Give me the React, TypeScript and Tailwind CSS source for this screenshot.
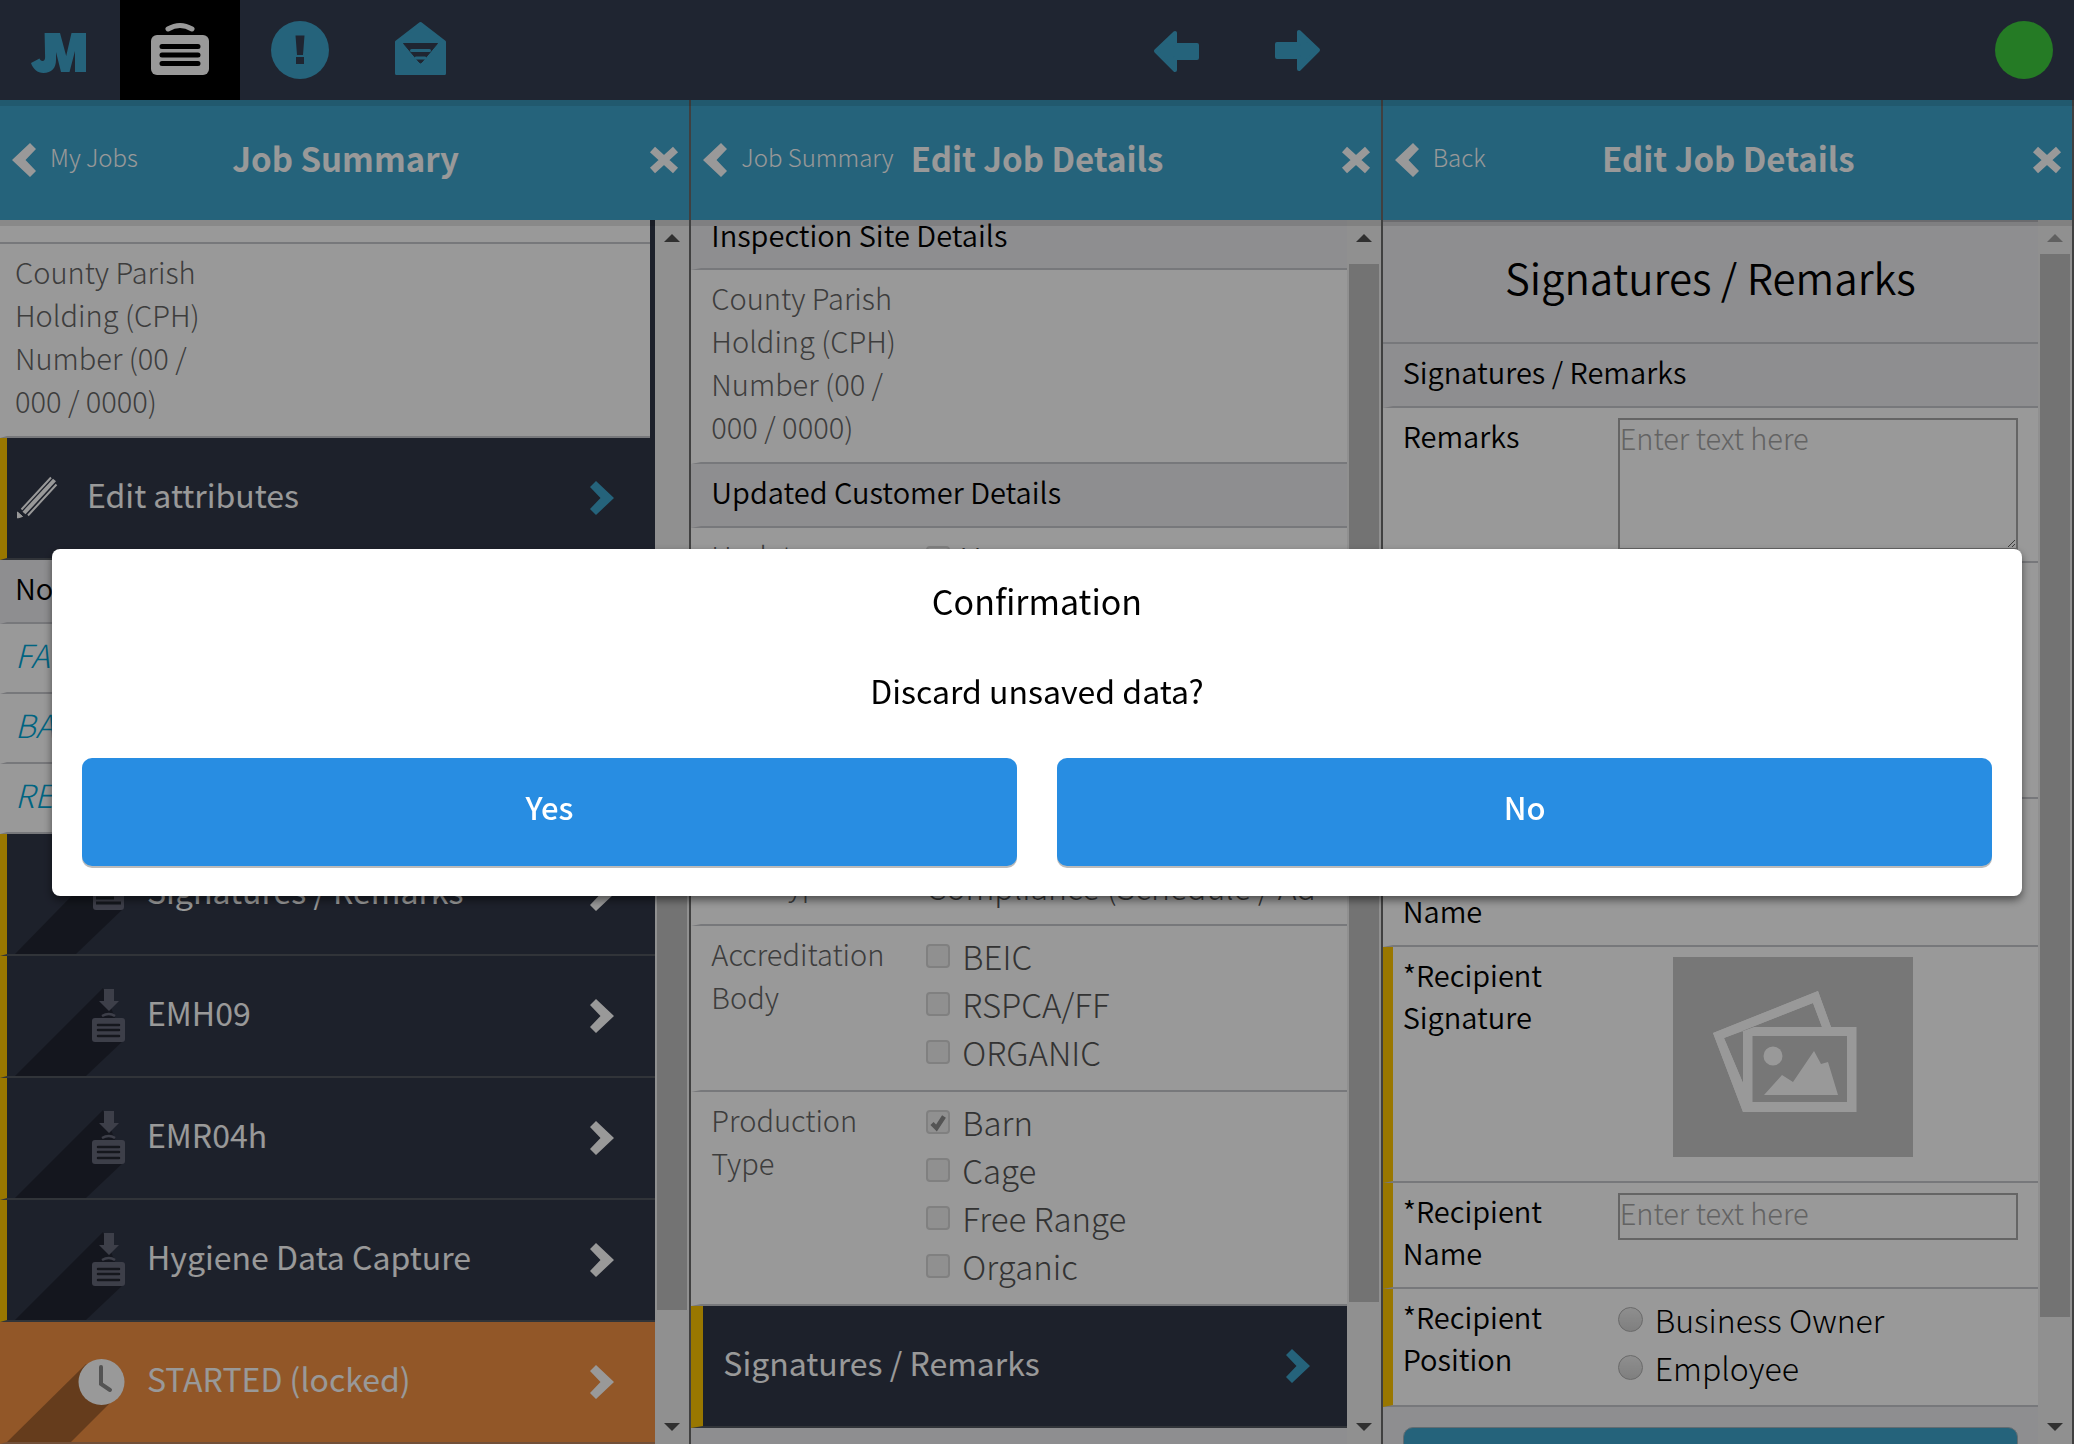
import type { ReactNode } from "react";

const CYAN = "#3ea5cd";

/* ---------- icons ---------- */

function BrandMark() {
  return (
    <svg viewBox="0 0 120 100" className="h-[100px] w-[120px]" aria-hidden="true">
      <path
        fill={CYAN}
        d="M44.6 33H60l6.2 23L71.500 33H86v39H75V51l-5.500 21H61l-5-20v8c0 8-4.500 13-12.500 13-6 0-10.500-4-12.500-10l8.500-4.500c.5 1.500 1.500 2.500 3 2.500 1.800 0 2.600-1.200 2.600-4z"
      />
    </svg>
  );
}

function CaseIcon() {
  return (
    <svg viewBox="0 0 120 100" className="h-[100px] w-[120px]" aria-hidden="true">
      <path d="M48 29q12-7 24 0" fill="none" stroke="#fff" strokeWidth="5" strokeLinecap="round" />
      <rect x="31" y="35" width="58" height="40" rx="6" fill="#fff" />
      <path d="M42 46.500h36M42 55h36M42 63.500h36" stroke="#000" strokeWidth="5" strokeLinecap="round" />
    </svg>
  );
}

function AlertIcon() {
  return (
    <svg viewBox="0 0 120 100" className="h-[100px] w-[120px]" aria-hidden="true">
      <circle cx="60" cy="50" r="29" fill={CYAN} />
      <path d="M55.500 35.500h9L63 55h-6zM56 57h8v7h-8z" fill="#353f52" />
    </svg>
  );
}

function MailIcon() {
  return (
    <svg viewBox="0 0 120 100" className="h-[100px] w-[120px]" aria-hidden="true">
      <path
        fill={CYAN}
        stroke={CYAN}
        strokeWidth="3"
        strokeLinejoin="round"
        d="M60.500 23.500 84.500 42v31.500h-48V42z"
      />
      <path d="M43.500 43.500h34L62 62q-1.500 2-3 0z" fill="#353f52" stroke="#353f52" strokeLinejoin="round" />
      <path d="M51.500 50.500h18M56 58h9" stroke={CYAN} strokeWidth="3" strokeLinecap="round" />
    </svg>
  );
}

function ArrowIcon({ back = false }: { back?: boolean }) {
  return (
    <svg viewBox="0 0 120 100" className="h-[100px] w-[120px]" aria-hidden="true">
      <path
        fill={CYAN}
        stroke={CYAN}
        strokeWidth="4"
        strokeLinejoin="round"
        d={
          back
            ? "M38 51 57 33v12h22v13H57v12z"
            : "M80 50 61 32v12H39v13h22v12z"
        }
      />
    </svg>
  );
}

function Chevron({ left = false, className }: { left?: boolean; className: string }) {
  return (
    <svg viewBox="0 0 24 34" className={className} fill="currentColor" aria-hidden="true">
      <path d={left ? "M18 0 24 6 13.500 17 24 28l-6 6L0 17z" : "M6 0 0 6l10.500 11L0 28l6 6 18-17z"} />
    </svg>
  );
}

function CloseIcon() {
  return (
    <svg viewBox="0 0 30 28" className="h-7 w-[30px]" stroke="#fff" strokeWidth="7.500" aria-hidden="true">
      <path d="M3.500 3.500 26.500 24.500M26.500 3.500 3.500 24.500" />
    </svg>
  );
}

function PencilIcon() {
  return (
    <svg viewBox="7 0 80 120" className="h-[120px] w-20 shrink-0" aria-hidden="true">
      <path d="M21.500 71.500 51 39.500M28 77.500 56.500 46.500" stroke="#fff" strokeWidth="2" />
      <path d="M24 75 54.500 42" stroke="#fff" strokeWidth="4" />
      <path d="M17.500 80v-6l5 4.500z" fill="#fff" stroke="#fff" />
    </svg>
  );
}

function DownloadCaseIcon() {
  return (
    <svg viewBox="7 0 140 120" className="h-[120px] w-[140px] shrink-0" aria-hidden="true">
      <path d="M103 32 15 120h71l38-36z" fill="#000" fillOpacity=".3" />
      <path d="M104 33h10v12h5l-10 10-10-10h5z" fill="#67697b" />
      <path d="M102 60q7-4 13 0" fill="none" stroke="#67697b" strokeWidth="2.500" />
      <rect x="92" y="62" width="33" height="24" rx="3" fill="#67697b" />
      <path d="M98 69h21M98 74h21M98 80h21" stroke="#232731" strokeWidth="2.500" strokeLinecap="round" />
    </svg>
  );
}

function DocumentIcon() {
  return (
    <svg viewBox="7 0 140 120" className="h-[120px] w-[140px] shrink-0" aria-hidden="true">
      <path d="M93 40 15 120h61l48-46z" fill="#000" fillOpacity=".3" />
      <rect x="93" y="36" width="31" height="40" rx="3" fill="#67697b" />
      <path d="M96 56h25M96 64h18M96 69h25" stroke="#232731" strokeWidth="3" />
    </svg>
  );
}

function ClockIcon() {
  return (
    <svg viewBox="7 0 140 120" className="h-[120px] w-[140px] shrink-0" aria-hidden="true">
      <path d="M86 42 7 120h64l42-42z" fill="#000" fillOpacity=".3" />
      <circle cx="101.500" cy="60" r="23" fill="#fff" />
      <path d="M101 45v17l9 6" fill="none" stroke="#8a8a8a" strokeWidth="4" strokeLinecap="round" />
    </svg>
  );
}

function PicturePlaceholder() {
  return (
    <div className="flex justify-center pt-1 pr-[50px] pb-2.5">
      <svg viewBox="0 0 240 200" className="h-[200px] w-60" role="img" aria-label="No picture">
        <rect width="240" height="200" fill="#c6c6c6" />
        <path
          fill="#fff"
          fillRule="evenodd"
          d="M145 34 40 76l30 79h113.500V70H158zM140 46l9 24H81l-11 4-19 7zM51 81l19-7.500V126zM79.500 79H174v66H79.500z"
        />
        <path fill="#fff" d="M40 76 145 34l13 36h-9l-9-24-89 35 19 45v29z" />
        <circle cx="100" cy="99" r="9.500" fill="#fff" />
        <path d="M91 138 109 118l11 7 21-31 7 13 7-2 10 33z" fill="#fff" />
      </svg>
    </div>
  );
}

/* ---------- building blocks ---------- */

function Panel({
  back,
  title,
  thumb,
  upMuted = false,
  children,
}: {
  back: string;
  title: string;
  thumb: [number, number, number];
  upMuted?: boolean;
  children: ReactNode;
}) {
  return (
    <section className="flex min-h-0 min-w-0 flex-col border-r-2 border-[#6c6c6c]">
      <header className="relative z-10 grid h-[120px] shrink-0 grid-cols-[1fr_auto_1fr] items-center bg-[#3ea5cd] pr-2.5 pl-3 text-white shadow-[0_6px_0_rgba(0,0,0,0.1)]">
        <button type="button" className="flex items-center gap-3.5">
          <Chevron left className="h-[34px] w-6 shrink-0" />
          <span className="pb-1.5 text-[24px] leading-9 font-light whitespace-nowrap">{back}</span>
        </button>
        <h2 className="pb-1 text-[33px] leading-[48px] font-bold whitespace-nowrap">{title}</h2>
        <button type="button" aria-label="Close" className="justify-self-end">
          <CloseIcon />
        </button>
      </header>
      <div className="flex min-h-0 grow">
        <div className="flex min-w-0 grow flex-col overflow-hidden bg-[#ededf0]">{children}</div>
        <div className="flex w-[34px] shrink-0 flex-col items-center bg-[#f0f0f0]" aria-hidden="true">
          <svg viewBox="0 0 34 34" className="size-[34px] shrink-0">
            <path d="M9 22h16l-8-8z" fill={upMuted ? "#a0a0a0" : "#505050"} />
          </svg>
          <div style={{ flexGrow: thumb[0] }} />
          <div className="w-[30px] bg-[#c0c0c0]" style={{ flexGrow: thumb[1] }} />
          <div style={{ flexGrow: thumb[2] }} />
          <svg viewBox="0 0 34 34" className="size-[34px] shrink-0">
            <path d="M9 13h16l-8 8z" fill="#505050" />
          </svg>
        </div>
      </div>
    </section>
  );
}

function SectionHeading({ children }: { children: ReactNode }) {
  return (
    <h3 className="shrink-0 border-b-2 border-l-10 border-b-[#c7c8cd] border-l-[#ededf0] bg-[#ededf0] pt-1.5 pb-3.5 pl-2.5 text-[29px] leading-[42px] font-[350] text-black">
      {children}
    </h3>
  );
}

function Field({
  label,
  required = false,
  muted = false,
  children,
}: {
  label: ReactNode;
  required?: boolean;
  muted?: boolean;
  children?: ReactNode;
}) {
  return (
    <div
      className={`flex shrink-0 border-b-2 border-l-10 border-b-[#c7c8cd] bg-white pt-1.5 pb-3.5 pl-2.5 ${
        required ? "border-l-[#ffc600]" : "border-l-white"
      }`}
    >
      <div
        className={`w-[215px] shrink-0 pr-3 text-[29px] ${
          muted ? "leading-[43px] font-light text-[#666]" : "leading-[42px] font-[350] text-black"
        }`}
      >
        {label}
      </div>
      <div className="min-w-0 grow pr-5">{children}</div>
    </div>
  );
}

function CheckOption({ label, checked = false }: { label: string; checked?: boolean }) {
  return (
    <label className="flex h-12 items-center gap-3 text-[33px] leading-[48px] font-light text-[#555]">
      <span className="relative size-6 shrink-0">
        <input
          type="checkbox"
          disabled
          defaultChecked={checked}
          className="block size-6 appearance-none rounded border-2 border-[#d6d6d6] bg-[#f0f0f0]"
        />
        {checked && (
          <svg viewBox="0 0 24 24" className="absolute inset-0 size-6" aria-hidden="true">
            <path d="M6 13.500 10.500 18 18 6.500" fill="none" stroke="#8c8c8c" strokeWidth="4.500" />
          </svg>
        )}
      </span>
      {label}
    </label>
  );
}

function RadioOption({ label }: { label: string }) {
  return (
    <label className="flex h-12 items-center gap-3 text-[32px] leading-[48px] font-light text-black">
      <input
        type="radio"
        name="recipient-position"
        className="block size-[25px] shrink-0 appearance-none rounded-full border border-[#b0b0b0] bg-linear-to-b from-[#eeeeee] to-[#d4d4d4]"
      />
      {label}
    </label>
  );
}

function NavRow({
  icon,
  label,
  accent = false,
  wideBar = false,
}: {
  icon?: ReactNode;
  label: string;
  accent?: boolean;
  wideBar?: boolean;
}) {
  return (
    <button
      type="button"
      className={`flex h-[122px] shrink-0 items-center border-b-2 border-b-[#53585f] border-l-[#ffc600] bg-[#313748] text-left text-white ${
        wideBar ? "border-l-12 pr-[37px] pl-5" : "border-l-7 pr-[41px]"
      }`}
    >
      {icon}
      <span className="grow pb-2 text-[32px] leading-[48px] font-normal">{label}</span>
      <Chevron className={`h-[34px] w-6 shrink-0 ${accent ? "text-[#3ea5cd]" : "text-white"}`} />
    </button>
  );
}

const notes = ["FARM", "BARN", "RECORDS"];

/* ---------- page ---------- */

export default function App() {
  return (
    <div className="flex h-screen flex-col overflow-hidden bg-[#353f52] font-['Noto_Sans_CJK_JP','Noto_Sans',sans-serif]">
      <nav className="relative z-20 flex h-[100px] shrink-0 items-center bg-[#353f52] shadow-[0_6px_0_rgba(0,0,0,0.1)]">
        <button type="button" aria-label="JM home">
          <BrandMark />
        </button>
        <button type="button" aria-label="Jobs" className="bg-black">
          <CaseIcon />
        </button>
        <button type="button" aria-label="Alerts">
          <AlertIcon />
        </button>
        <button type="button" aria-label="Messages">
          <MailIcon />
        </button>
        <div className="flex grow justify-center">
          <button type="button" aria-label="Previous">
            <ArrowIcon back />
          </button>
          <button type="button" aria-label="Next">
            <ArrowIcon />
          </button>
        </div>
        <div role="status" aria-label="Online" className="mr-[21px] size-[58px] rounded-full bg-[#3ecd3e]" />
      </nav>

      <main className="grid min-h-0 grow grid-cols-3">
        <Panel back="My Jobs" title="Job Summary" thumb={[446, 610, 100]}>
          <div className="shrink-0 border-r-[5px] border-[#313748] bg-white">
            <div className="h-6 border-b-2 border-[#c7c8cd]" />
            <div className="border-b-2 border-l-7 border-b-[#c7c8cd] border-l-white pt-1.5 pb-3.5 pl-2">
              <p className="w-[205px] text-[29px] leading-[43px] font-light text-[#666]">
                County Parish Holding (CPH) Number (00 / 000 / 0000)
              </p>
            </div>
          </div>
          <NavRow icon={<PencilIcon />} label="Edit attributes" accent />
          <h3 className="shrink-0 border-b-2 border-l-7 border-b-[#c7c8cd] border-l-[#ededf0] bg-[#ededf0] pt-1.5 pb-3.5 pl-2 text-[29px] leading-[42px] font-[350] text-black">
            Notes
          </h3>
          {notes.map((note) => (
            <a
              key={note}
              href="#note"
              className="block shrink-0 border-b-2 border-l-7 border-b-[#c7c8cd] border-l-white bg-white pt-1.5 pb-3.5 pl-2 text-[32px] leading-[48px] font-light text-[#00a7d8] italic"
            >
              {note}
            </a>
          ))}
          <NavRow icon={<DocumentIcon />} label="Signatures / Remarks" />
          <NavRow icon={<DownloadCaseIcon />} label="EMH09" />
          <NavRow icon={<DownloadCaseIcon />} label="EMR04h" />
          <NavRow icon={<DownloadCaseIcon />} label="Hygiene Data Capture" />
          <button
            type="button"
            className="flex h-[122px] shrink-0 items-center border-b-2 border-l-7 border-b-[#bf8560] border-l-[#f39144] bg-[#f39144] pr-[41px] text-left text-white"
          >
            <ClockIcon />
            <span className="grow pb-2 text-[32px] leading-[48px] font-normal">STARTED (locked)</span>
            <Chevron className="h-[34px] w-6 shrink-0 text-white" />
          </button>
        </Panel>

        <Panel back="Job Summary" title="Edit Job Details" thumb={[10, 1038, 108]}>
          <h3 className="shrink-0 border-b-2 border-l-10 border-b-[#c7c8cd] border-l-[#ededf0] pb-5 pl-2.5 text-[29px] leading-7 font-[350] text-black">
            Inspection Site Details
          </h3>
          <Field muted label="County Parish Holding (CPH) Number (00 / 000 / 0000)" />
          <SectionHeading>Updated Customer Details</SectionHeading>
          <Field muted label="Update">
            <CheckOption label="Yes" />
          </Field>
          <SectionHeading>Visit Details</SectionHeading>
          <Field muted label="Visit Reason">
            <div className="h-[172px]" />
          </Field>
          <Field muted label="Visit Type">
            <p className="text-[32px] leading-[48px] font-light whitespace-nowrap text-[#555]">
              Compliance (Schedule / Ad
            </p>
          </Field>
          <Field muted label="Accreditation Body">
            <CheckOption label="BEIC" />
            <CheckOption label="RSPCA/FF" />
            <CheckOption label="ORGANIC" />
          </Field>
          <Field muted label="Production Type">
            <CheckOption label="Barn" checked />
            <CheckOption label="Cage" />
            <CheckOption label="Free Range" />
            <CheckOption label="Organic" />
          </Field>
          <NavRow label="Signatures / Remarks" accent wideBar />
        </Panel>

        <Panel back="Back" title="Edit Job Details" thumb={[0, 1063, 93]} upMuted>
          <h1 className="shrink-0 border-y-2 border-[#c7c8cd] pt-7 pb-[38px] text-center text-[42px] leading-[54px] font-[350] text-black">
            Signatures / Remarks
          </h1>
          <SectionHeading>Signatures / Remarks</SectionHeading>
          <div className="flex shrink-0 border-b-2 border-l-10 border-b-[#c7c8cd] border-l-white bg-white pt-1.5 pb-[11px] pl-2.5">
            <label htmlFor="remarks" className="w-[215px] shrink-0 text-[29px] leading-[42px] font-[350] text-black">
              Remarks
            </label>
            <textarea
              id="remarks"
              placeholder="Enter text here"
              className="mt-1 mr-5 block h-[132px] min-w-0 grow border-2 border-[#a9a9a9] bg-white text-[29px] leading-[34px] font-light text-black placeholder:text-[#a5a5a5]"
            />
          </div>
          <Field label="Inspector Signature">
            <PicturePlaceholder />
          </Field>
          <Field label={<span className="block w-[120px]">Inspecting Officer Name</span>} />
          <Field label="*Recipient Signature" required>
            <PicturePlaceholder />
          </Field>
          <Field label={<label htmlFor="recipient-name">*Recipient Name</label>} required>
            <input
              id="recipient-name"
              type="text"
              placeholder="Enter text here"
              className="mt-1 block h-[47px] w-full border-2 border-[#a9a9a9] bg-white pb-2.5 text-[29px] leading-[34px] font-light text-black placeholder:text-[#a5a5a5]"
            />
          </Field>
          <Field label="*Recipient Position" required>
            <RadioOption label="Business Owner" />
            <RadioOption label="Employee" />
          </Field>
          <button
            type="button"
            aria-label="Save"
            className="mx-5 mt-5 h-[108px] shrink-0 rounded-[10px] border border-[#a5b5bd] bg-[#3ea5cd]"
          />
        </Panel>
      </main>

      <div className="fixed inset-0 z-30 flex items-center justify-center bg-black/40 pt-px">
        <div
          role="dialog"
          aria-modal="true"
          aria-labelledby="dialog-title"
          className="w-[95%] rounded-lg bg-white px-[30px] pt-7 pb-[30px] text-center text-black shadow-[0_4px_8px_rgba(0,0,0,0.5)]"
        >
          <h2 id="dialog-title" className="text-[34px] leading-[48px] font-normal">
            Confirmation
          </h2>
          <p className="mt-[41px] text-[32px] leading-[48px]">Discard unsaved data?</p>
          <div className="mt-11 grid grid-cols-2 gap-10">
            <button
              type="button"
              className="h-[108px] rounded-[10px] bg-[#288de2] pb-2.5 text-[31px] leading-[48px] font-medium text-white shadow-[0_2px_0_#bbbbbb]"
            >
              Yes
            </button>
            <button
              type="button"
              className="h-[108px] rounded-[10px] bg-[#288de2] pb-2.5 text-[31px] leading-[48px] font-medium text-white shadow-[0_2px_0_#bbbbbb]"
            >
              No
            </button>
          </div>
        </div>
      </div>
    </div>
  );
}
